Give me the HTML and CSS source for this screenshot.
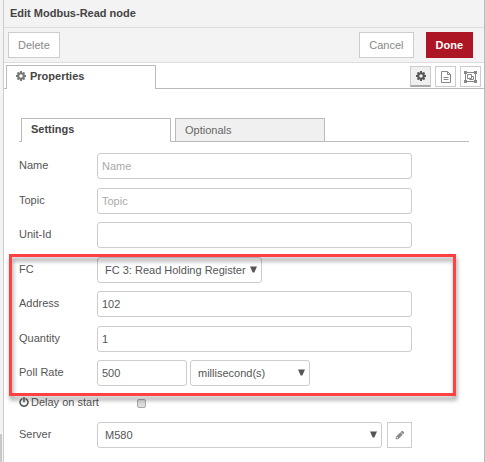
FILE: index.html
```html
<!DOCTYPE html>
<html lang="en">
<head>
<meta charset="utf-8">
<title>Edit Modbus-Read node</title>
<link rel="stylesheet" href="styles.css">
</head>
<body>
<svg class="defs" aria-hidden="true">
  <symbol id="cog" viewBox="0 -128 1536 1536"><path d="M1024 640q0-106-75-181t-181-75-181 75-75 181 75 181 181 75 181-75 75-181zm512-109v222q0 12-8 23t-20 13l-185 28q-19 54-39 91 35 50 107 138 10 12 10 25t-9 23q-27 37-99 108t-94 71q-12 0-26-9l-138-108q-44 23-91 38-16 136-29 186-7 28-36 28h-222q-14 0-24.500-8.500t-11.500-21.500l-28-184q-49-16-90-37l-141 107q-10 9-25 9-14 0-25-11-126-114-165-168-7-10-7-23 0-12 8-23 15-21 51-66.500t54-70.500q-27-50-41-99l-183-27q-13-2-21-12.500t-8-23.500v-222q0-12 8-23t19-13l186-28q14-46 39-92-40-57-107-138-10-12-10-24 0-10 9-23 26-36 98.500-107.500t94.500-71.500q13 0 26 10l138 107q44-23 91-38 16-136 29-186 7-28 36-28h222q14 0 24.500 8.500t11.500 21.500l28 184q49 16 90 37l142-107q9-9 24-9 13 0 25 10 129 119 165 170 7 8 7 22 0 12-8 23-15 21-51 66.500t-54 70.500q26 50 41 98l183 28q13 2 21 12.500t8 23.500z"/></symbol>
  <symbol id="arrow" viewBox="0 0 7 7"><path d="M0 0.500H7L4.300 6.500H2.700Z"/></symbol>
</svg>
<div class="workspace">
  <div class="gutter"><div class="thumb"></div></div>
  <main class="tray">
    <h1 class="title">Edit Modbus-Read node</h1>
    <div class="toolbar">
      <button class="btn" type="button">Delete</button>
      <button class="btn cancel" type="button">Cancel</button>
      <button class="btn primary" type="button">Done</button>
    </div>
    <div class="tabs">
      <button class="tab active" type="button"><svg class="icon"><use href="#cog"/></svg>Properties</button>
      <div class="tools">
        <button class="tool selected" type="button" aria-label="Properties"><svg class="icon"><use href="#cog"/></svg></button>
        <button class="tool" type="button" aria-label="Description"><svg class="doc line" viewBox="0 0 10 12"><path d="M.5.5h6l3 3v8h-9zM6.500.5v3h3M2.500 6.500h5M2.500 8.500h5"/></svg></button>
        <button class="tool" type="button" aria-label="Appearance"><svg class="group line" viewBox="0 0 13 12"><path d="M1.500 1.500h10v9h-10zM3.500 3.500h4v4h-4zM7.500 5.500h2v3h-4v-1"/><path class="solid" d="M0 0h3v3H0zM10 0h3v3h-3zM0 9h3v3H0zM10 9h3v3h-3z"/></svg></button>
      </div>
    </div>
    <form class="form">
      <div class="subtabs">
        <button class="tab active" type="button">Settings</button>
        <button class="tab" type="button">Optionals</button>
      </div>
      <div class="fields">
        <div class="row"><label for="name">Name</label><input class="control" id="name" type="text" placeholder="Name"></div>
        <div class="row"><label for="topic">Topic</label><input class="control" id="topic" type="text" placeholder="Topic"></div>
        <div class="row"><label for="unit">Unit-Id</label><input class="control" id="unit" type="text"></div>
        <div class="row"><label for="fc">FC</label><div class="select fc"><select class="control" id="fc"><option>FC 3: Read Holding Register</option></select><svg><use href="#arrow"/></svg></div></div>
        <div class="row"><label for="address">Address</label><input class="control" id="address" type="text" value="102"></div>
        <div class="row"><label for="quantity">Quantity</label><input class="control" id="quantity" type="text" value="1"></div>
        <div class="row"><label for="rate">Poll Rate</label><div class="pair"><input class="control rate" id="rate" type="text" value="500"><div class="select unit"><select class="control" aria-label="Poll rate unit"><option>millisecond(s)</option></select><svg><use href="#arrow"/></svg></div></div></div>
        <div class="highlight"></div>
      </div>
      <div class="delay">
        <label for="delay"><svg class="power line" viewBox="0 0 10 10"><path d="M3 1.800a4 4 0 1 0 4 0M5 .7v4"/></svg>Delay on start</label>
        <input id="delay" type="checkbox">
      </div>
      <div class="row"><label for="server">Server</label><div class="pair server"><div class="select"><select class="control" id="server"><option>M580</option></select><svg><use href="#arrow"/></svg></div><button class="edit" type="button" aria-label="Edit server"><svg class="icon" viewBox="0 0 1792 1792"><path d="M491 1536l91-91-235-235-91 91v107h128v128h107zM960 416l416 416-832 832h-416v-416zm683 96q0 53-37 90l-166 166-416-416 166-165q36-38 90-38 53 0 91 38l235 234q37 39 37 91z"/></svg></button></div></div>
    </form>
  </main>
</div>
</body>
</html>
```
FILE: styles.css
```css
* { box-sizing: border-box; }
body {
  margin: 0;
  background: #fff;
  color: #444;
  font: 11px/16px "Liberation Sans", Arial, sans-serif;
}
button, input, select { font: inherit; color: inherit; }
button { padding: 0; }
svg { display: block; fill: currentColor; }
.line { fill: none; stroke: currentColor; }
.solid { fill: currentColor; stroke: none; }
.defs { position: absolute; width: 0; height: 0; }
.workspace { display: flex; min-height: 100vh; }
.gutter {
  display: flex;
  align-items: flex-end;
  width: 4px;
  background: #f3f3f3;
  border-right: 1px solid #ccc;
}
.thumb { width: 2px; height: 28px; background: #c8c8c8; }
.tray { flex: 1; min-width: 0; border-right: 1px solid #bbb; }
.title {
  margin: 0;
  padding: 5px 6px 6px;
  background: #f3f3f3;
  border-bottom: 1px solid #ddd;
  font-size: 11px;
  font-weight: bold;
}
.toolbar {
  display: flex;
  align-items: center;
  gap: 12px;
  height: 35px;
  padding: 0 11px 0 4px;
  background: #f3f3f3;
  border-bottom: 1px solid #ddd;
}
.btn {
  height: 26px;
  padding: 0 9px;
  background: #fff;
  border: 1px solid #ccc;
  color: #888;
}
.cancel { margin-left: auto; }
.primary { background: #ad1625; border-color: #ad1625; color: #fff; font-weight: bold; }
.tabs, .subtabs { display: flex; align-items: flex-end; border-bottom: 1px solid #bbb; }
.tabs { justify-content: space-between; padding: 2px 3px 0 2px; }
.tab {
  display: flex;
  align-items: center;
  gap: 4px;
  width: 150px;
  height: 23px;
  padding: 0 9px 1px;
  background: #f0f0f0;
  border: 1px solid #bbb;
  border-bottom: 0;
  color: #666;
}
.tab.active { height: 24px; margin-bottom: -1px; padding-bottom: 3px; background: #fff; color: #444; font-weight: bold; }
.tab .icon { color: #777; }
.icon { width: 10px; height: 10px; }
.tools { display: flex; gap: 4px; padding-bottom: 1px; }
.tool {
  display: flex;
  align-items: center;
  justify-content: center;
  width: 21px;
  height: 21px;
  background: #fff;
  border: 1px solid #ccc;
  color: #888;
}
.tool.selected { background: #f0f0f0; border-bottom: 2px solid #aaa; color: #555; }
.doc { width: 10px; height: 12px; }
.group { width: 13px; height: 12px; }
.form { padding: 29px 15px 14px; }
.subtabs { gap: 4px; padding-left: 2px; }
.fields {
  position: relative;
  display: flex;
  flex-direction: column;
  justify-content: space-between;
  height: 233px;
  margin-top: 11px;
}
.row { display: flex; padding-right: 57px; color: #555; }
.row > label { width: 78px; padding-top: 4px; flex: none; }
.row > .control { flex: 1; min-width: 0; }
.control {
  width: 100%;
  height: 26px;
  padding: 0 4px;
  background: #fff;
  border: 1px solid #ccc;
  border-radius: 3px;
}
.control::placeholder { color: #aaa; opacity: 1; }
.select { position: relative; }
.select .control { appearance: none; padding: 0 7px; }
.select svg { position: absolute; top: 9px; right: 5px; width: 7px; height: 7px; pointer-events: none; }
.fc { width: 165px; }
.pair { display: flex; gap: 3px; flex: 1; }
.rate { width: 90px; }
.unit { width: 120px; }
.server { gap: 5px; }
.server .select { flex: 1; }
.edit {
  display: flex;
  align-items: center;
  justify-content: center;
  width: 25px;
  height: 26px;
  background: #fff;
  border: 1px solid #ccc;
  color: #888;
}
.highlight {
  position: absolute;
  top: 101px;
  right: 13px;
  bottom: -10px;
  left: -10px;
  border: 3px solid #ff4141;
  filter: drop-shadow(1px 4px 2px rgba(0, 0, 0, .4));
  pointer-events: none;
}
.delay { display: flex; align-items: center; height: 16px; margin: 8px 0 12px; color: #555; }
.delay label { display: flex; align-items: center; gap: 2px; width: 118px; }
.power { width: 10px; height: 10px; stroke-width: 1.5; stroke-linecap: round; }
.delay input {
  appearance: none;
  width: 9px;
  height: 9px;
  margin: 3px 0 0;
  background: #ddd;
  border: 1px solid #aaa;
  border-radius: 2px;
}
```
